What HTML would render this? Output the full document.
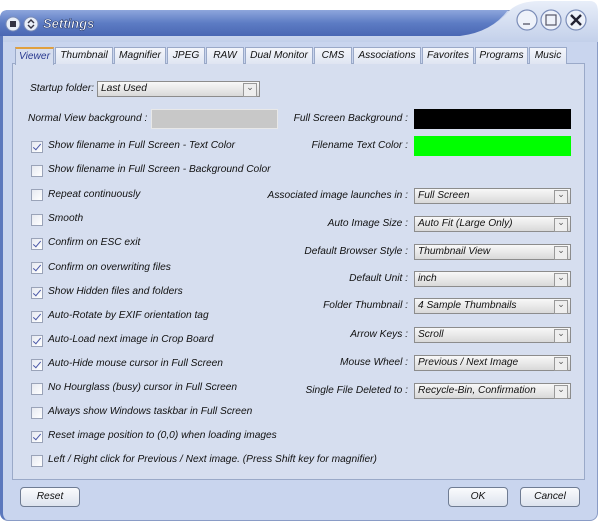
<!DOCTYPE html>
<html><head><meta charset="utf-8"><style>
*{margin:0;padding:0;box-sizing:border-box}
body{width:600px;height:523px;background:#fff;position:relative;overflow:hidden;font-family:"Liberation Sans",sans-serif;font-style:italic;font-size:10.2px;color:#111}
.a{position:absolute;white-space:nowrap}
#win{position:absolute;left:0;top:10px;width:598px;height:511px;background:#c9d5ee;border:1px solid #8a9cc6;border-radius:8px 8px 8px 8px;border-left:3px solid #5b78bd}
#panel{position:absolute;left:12px;top:63px;width:573px;height:417px;background:#d6deef;border:1px solid #9aa9c8}
.tab{position:absolute;top:47px;height:17px;background:linear-gradient(#f4f6fb,#dfe5f2);border:1px solid #9aa9c8;border-bottom:none;text-align:center;line-height:16px;font-size:10.2px}
.cb{position:absolute;left:31px;width:12px;height:12px;background:linear-gradient(135deg,#e6e9f1,#fff);border:1px solid #9aa3b8}
.cb.c::after{content:"";position:absolute;left:3px;top:0px;width:3px;height:7px;border:solid #4a58a8;border-width:0 1.5px 1.5px 0;transform:rotate(40deg)}
.lbl{position:absolute;left:48px;white-space:nowrap}
.rl{position:absolute;right:192px;text-align:right;white-space:nowrap}
.dd{position:absolute;left:414px;width:157px;height:16px;background:linear-gradient(#f8f8f8,#d9d9d9);border:1px solid #8c8c8c;padding-left:3px;line-height:14px}
.dd::after{content:"⌄";position:absolute;right:2px;top:1px;width:12px;height:12px;border:1px solid #999;background:#eee;font-size:9px;line-height:6px;text-align:center;color:#555;font-style:normal}
.btn{position:absolute;top:487px;height:20px;border:1px solid #6f7c93;border-radius:4px;background:linear-gradient(#fafbfd,#dde3ee);text-align:center;line-height:18px}
</style></head><body>
<div id="win"></div>
<svg class="a" style="left:0;top:0" width="600" height="42">
<defs><linearGradient id="g" x1="0" y1="0" x2="0" y2="1"><stop offset="0" stop-color="#8ea6dc"/><stop offset="0.5" stop-color="#5d7cc4"/><stop offset="1" stop-color="#4a67b3"/></linearGradient>
<linearGradient id="g2" x1="0" y1="0" x2="0" y2="1"><stop offset="0" stop-color="#e8eef9"/><stop offset="1" stop-color="#c3d0ea"/></linearGradient></defs>
<path d="M3 36 L460 36 Q495 30 510 10 Q520 1 540 1 L590 1 Q598 1 598 12 L598 42 L3 42Z" fill="url(#g2)"/>
<path d="M0 18 Q0 10 8 10 L508 10 Q492 32 460 36 L0 36Z" fill="url(#g)"/>
<circle cx="13" cy="24" r="7" fill="#e8eef8" stroke="#7b8db8"/><rect x="10" y="21" width="6" height="6" fill="#334"/>
<circle cx="31" cy="24" r="7" fill="#e8eef8" stroke="#7b8db8"/><path d="M28 23 L31 20 L34 23 M28 25 L31 28 L34 25" stroke="#334" fill="none" stroke-width="1.4"/>
<g fill="#eef2fa" stroke="#7b8db8" stroke-width="1.2"><circle cx="527" cy="20" r="10"/><circle cx="551" cy="20" r="10"/><circle cx="576" cy="20" r="10"/></g>
<path d="M523 24 H530" stroke="#556" stroke-width="1.3"/><rect x="546" y="15" width="10" height="10" fill="none" stroke="#556" stroke-width="1.2"/>
<path d="M571 15 L581 25 M581 15 L571 25" stroke="#223" stroke-width="2.4"/>
<text x="43" y="28" font-family="Liberation Sans" font-weight="bold" font-size="13" fill="#fff" stroke="#2a3d70" stroke-width="0.6">Settings</text>
</svg>
<div id="panel"></div>
<div class="tab" style="left:15px;width:39px;background:#d6deef;border-top:2px solid #e0a040;color:#2a3a90;height:18px">Viewer</div>
<div class="tab" style="left:55px;width:58px">Thumbnail</div>
<div class="tab" style="left:114px;width:52px">Magnifier</div>
<div class="tab" style="left:167px;width:38px">JPEG</div>
<div class="tab" style="left:206px;width:38px">RAW</div>
<div class="tab" style="left:245px;width:68px">Dual Monitor</div>
<div class="tab" style="left:314px;width:38px">CMS</div>
<div class="tab" style="left:353px;width:68px">Associations</div>
<div class="tab" style="left:422px;width:52px">Favorites</div>
<div class="tab" style="left:475px;width:53px">Programs</div>
<div class="tab" style="left:529px;width:38px">Music</div>

<div class="a" style="left:30px;top:83px">Startup folder:</div>
<div class="dd" style="left:97px;width:163px;top:81px">Last Used</div>
<div class="a" style="left:28px;top:113px">Normal View background :</div>
<div class="a" style="left:151px;top:109px;width:127px;height:20px;background:#c8c8c8;border:1px solid #e8e8e8"></div>
<div class="rl" style="top:113px">Full Screen Background :</div>
<div class="a" style="left:414px;top:109px;width:157px;height:20px;background:#000"></div>
<div class="rl" style="top:140px">Filename Text Color :</div>
<div class="a" style="left:414px;top:136px;width:157px;height:20px;background:#00ff00"></div>

<div class="cb c" style="top:141px"></div><div class="lbl" style="top:140px">Show filename in Full Screen - Text Color</div>
<div class="cb" style="top:165px"></div><div class="lbl" style="top:164px">Show filename in Full Screen - Background Color</div>
<div class="cb" style="top:189px"></div><div class="lbl" style="top:189px">Repeat continuously</div>
<div class="cb" style="top:214px"></div><div class="lbl" style="top:213px">Smooth</div>
<div class="cb c" style="top:238px"></div><div class="lbl" style="top:237px">Confirm on ESC exit</div>
<div class="cb c" style="top:262px"></div><div class="lbl" style="top:262px">Confirm on overwriting files</div>
<div class="cb c" style="top:287px"></div><div class="lbl" style="top:286px">Show Hidden files and folders</div>
<div class="cb c" style="top:311px"></div><div class="lbl" style="top:310px">Auto-Rotate by EXIF orientation tag</div>
<div class="cb c" style="top:335px"></div><div class="lbl" style="top:334px">Auto-Load next image in Crop Board</div>
<div class="cb c" style="top:359px"></div><div class="lbl" style="top:358px">Auto-Hide mouse cursor in Full Screen</div>
<div class="cb" style="top:383px"></div><div class="lbl" style="top:382px">No Hourglass (busy) cursor in Full Screen</div>
<div class="cb" style="top:407px"></div><div class="lbl" style="top:406px">Always show Windows taskbar in Full Screen</div>
<div class="cb c" style="top:431px"></div><div class="lbl" style="top:430px">Reset image position to (0,0) when loading images</div>
<div class="cb" style="top:455px"></div><div class="lbl" style="top:454px">Left / Right click for Previous / Next image. (Press Shift key for magnifier)</div>

<div class="rl" style="top:190px">Associated image launches in :</div><div class="dd" style="top:188px">Full Screen</div>
<div class="rl" style="top:218px">Auto Image Size :</div><div class="dd" style="top:216px">Auto Fit (Large Only)</div>
<div class="rl" style="top:246px">Default Browser Style :</div><div class="dd" style="top:244px">Thumbnail View</div>
<div class="rl" style="top:273px">Default Unit :</div><div class="dd" style="top:271px">inch</div>
<div class="rl" style="top:300px">Folder Thumbnail :</div><div class="dd" style="top:298px">4 Sample Thumbnails</div>
<div class="rl" style="top:329px">Arrow Keys :</div><div class="dd" style="top:327px">Scroll</div>
<div class="rl" style="top:357px">Mouse Wheel :</div><div class="dd" style="top:355px">Previous / Next Image</div>
<div class="rl" style="top:385px">Single File Deleted to :</div><div class="dd" style="top:383px">Recycle-Bin, Confirmation</div>

<div class="btn" style="left:20px;width:60px">Reset</div>
<div class="btn" style="left:448px;width:60px">OK</div>
<div class="btn" style="left:520px;width:60px">Cancel</div>
</body></html>
